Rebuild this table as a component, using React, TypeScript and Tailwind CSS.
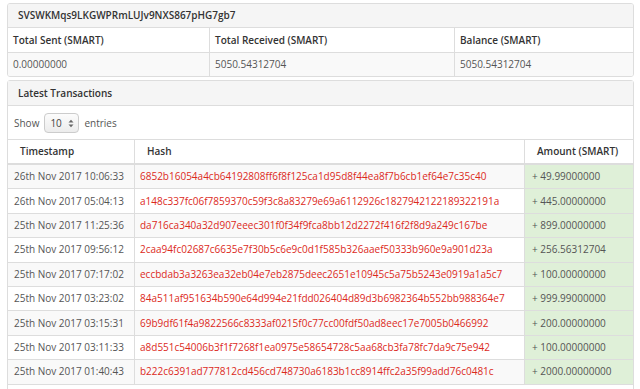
import React from "react";

const rows: [string, string, string][] = [
  ["26th Nov 2017 10:06:33", "6852b16054a4cb64192808ff6f8f125ca1d95d8f44ea8f7b6cb1ef64e7c35c40", "+ 49.99000000"],
  ["26th Nov 2017 05:04:13", "a148c337fc06f7859370c59f3c8a83279e69a6112926c1827942122189322191a", "+ 445.00000000"],
  ["25th Nov 2017 11:25:36", "da716ca340a32d907eeec301f0f34f9fca8bb12d2272f416f2f8d9a249c167be", "+ 899.00000000"],
  ["25th Nov 2017 09:56:12", "2caa94fc02687c6635e7f30b5c6e9c0d1f585b326aaef50333b960e9a901d23a", "+ 256.56312704"],
  ["25th Nov 2017 07:17:02", "eccbdab3a3263ea32eb04e7eb2875deec2651e10945c5a75b5243e0919a1a5c7", "+ 100.00000000"],
  ["25th Nov 2017 03:23:02", "84a511af951634b590e64d994e21fdd026404d89d3b6982364b552bb988364e7", "+ 999.99000000"],
  ["25th Nov 2017 03:15:31", "69b9df61f4a9822566c8333af0215f0c77cc00fdf50ad8eec17e7005b0466992", "+ 200.00000000"],
  ["25th Nov 2017 03:11:33", "a8d551c54006b3f1f7268f1ea0975e58654728c5aa68cb3fa78fc7da9c75e942", "+ 100.00000000"],
  ["25th Nov 2017 01:40:43", "b222c6391ad777812cd456cd748730a6183b1cc8914ffc2a35f99add76c0481c", "+ 2000.00000000"],
];

export default function App() {
  return (
    <div
      className="w-[640px] h-[389px] overflow-hidden bg-white pt-[3px] pl-[7px] pr-[6px] text-[#555]"
      style={{ fontFamily: '"Open Sans", "Liberation Sans", sans-serif' }}
    >
      {/* Address panel */}
      <div className="border border-[#ddd] rounded-[3px] overflow-hidden">
        <div className="h-[24px] bg-[#f5f5f5] border-b border-[#ddd] px-[10px] flex items-center text-[10px] font-semibold text-[#333]">
          SVSWKMqs9LKGWPRmLUJv9NXS867pHG7gb7
        </div>
        <div className="grid grid-cols-[202px_245px_1fr] text-[10px]">
          <div className="h-[24px] flex items-center pl-[5px] font-semibold text-[#333] border-r border-[#ddd]">Total Sent (SMART)</div>
          <div className="h-[24px] flex items-center pl-[5px] font-semibold text-[#333] border-r border-[#ddd]">Total Received (SMART)</div>
          <div className="h-[24px] flex items-center pl-[5px] font-semibold text-[#333]">Balance (SMART)</div>
          <div className="h-[24px] flex items-center pl-[5px] bg-[#f9f9f9] border-t border-r border-[#ddd]">0.00000000</div>
          <div className="h-[24px] flex items-center pl-[5px] bg-[#f9f9f9] border-t border-r border-[#ddd]">5050.54312704</div>
          <div className="h-[24px] flex items-center pl-[5px] bg-[#f9f9f9] border-t border-[#ddd]">5050.54312704</div>
        </div>
      </div>

      {/* Transactions panel */}
      <div className="mt-[3px] border border-[#ddd] rounded-t-[3px] h-[320px]">
        <div className="h-[25px] bg-[#f5f5f5] border-b border-[#ddd] px-[10px] flex items-center text-[10px] font-semibold text-[#333]">
          Latest Transactions
        </div>
        <div className="flex items-center h-[33px] pl-[6px] pt-[1px] text-[10px]">
          <span>Show</span>
          <div className="mx-[5px] w-[35px] h-[20px] rounded-[4px] border border-[#ccc] bg-gradient-to-b from-[#fcfcfc] to-[#ececec] flex items-center justify-between pl-[5px] pr-[4px] text-[#444]">
            <span>10</span>
            <svg width="6" height="9" viewBox="0 0 6 9">
              <path d="M0.5 3.5 L3 0.8 L5.5 3.5 Z" fill="#666" />
              <path d="M0.5 5.5 L3 8.2 L5.5 5.5 Z" fill="#666" />
            </svg>
          </div>
          <span>entries</span>
        </div>
        <div className="border-t border-[#ddd] text-[10px]">
          <div className="grid grid-cols-[127px_390px_1fr] h-[25px] border-b-2 border-[#ddd] font-semibold text-[#333]">
            <div className="flex items-center pl-[12px] border-r border-[#ddd]">Timestamp</div>
            <div className="flex items-center pl-[12px] border-r border-[#ddd]">Hash</div>
            <div className="flex items-center pl-[12px]">Amount (SMART)</div>
          </div>
          {rows.map((r, i) => (
            <div
              key={i}
              className={
                "grid grid-cols-[127px_390px_1fr] h-[24.4px] border-b border-[#ddd] " +
                (i % 2 === 0 ? "bg-[#f9f9f9]" : "bg-white")
              }
            >
              <div className="flex items-center pl-[6px] border-r border-[#ddd] whitespace-nowrap">{r[0]}</div>
              <div className="flex items-center pl-[5px] border-r border-[#ddd] text-[#dc2a1c] whitespace-nowrap overflow-hidden">{r[1]}</div>
              <div className="flex items-center pl-[7px] bg-[#dff0d8] whitespace-nowrap">{r[2]}</div>
            </div>
          ))}
        </div>
      </div>
    </div>
  );
}
